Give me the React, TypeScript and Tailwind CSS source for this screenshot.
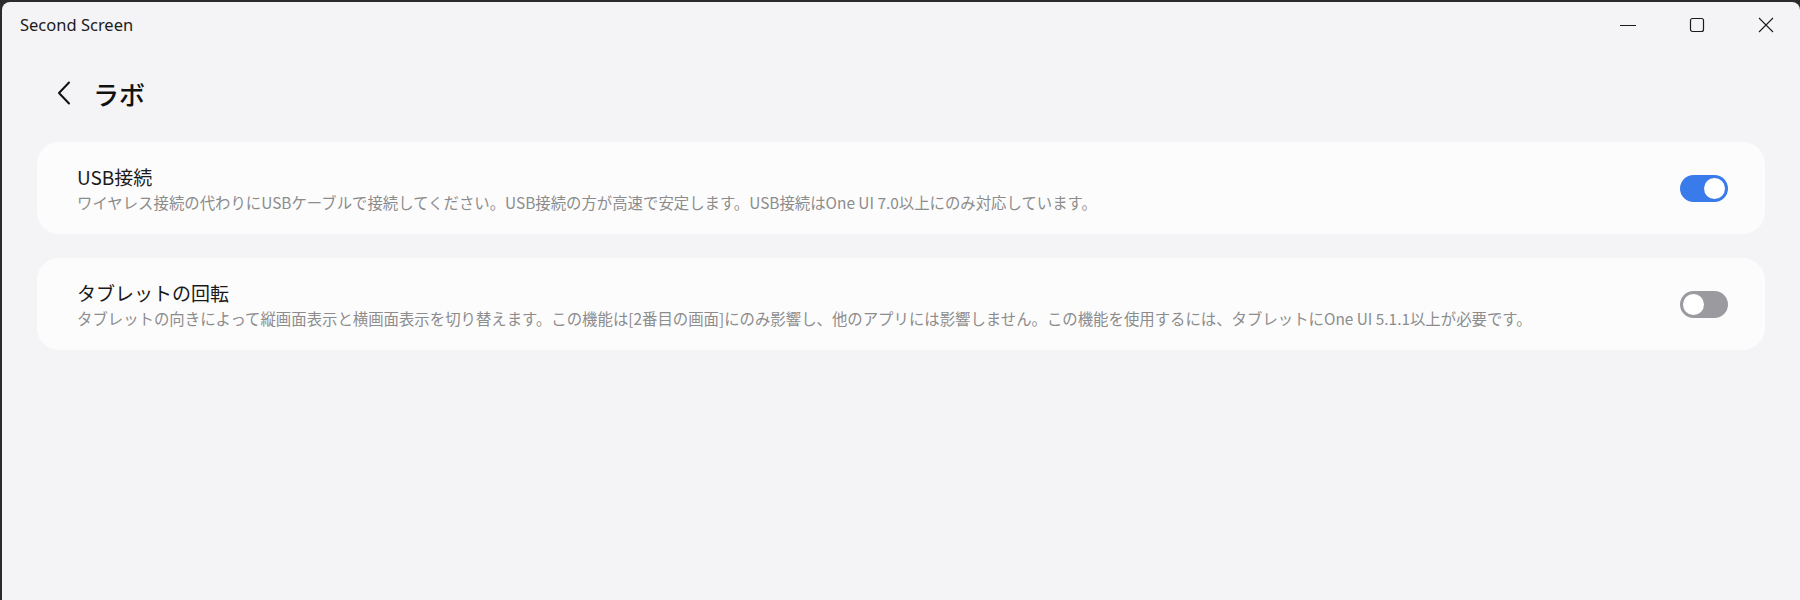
import React, { useState } from "react";

const jp = { fontFamily: '"Noto Sans CJK JP", sans-serif' };

type Setting = {
  id: string;
  title: string;
  description: string;
  enabled: boolean;
};

const initialSettings: Setting[] = [
  {
    id: "usb",
    title: "USB接続",
    description:
      "ワイヤレス接続の代わりにUSBケーブルで接続してください。USB接続の方が高速で安定します。USB接続はOne UI 7.0以上にのみ対応しています。",
    enabled: true,
  },
  {
    id: "rotate",
    title: "タブレットの回転",
    description:
      "タブレットの向きによって縦画面表示と横画面表示を切り替えます。この機能は[2番目の画面]にのみ影響し、他のアプリには影響しません。この機能を使用するには、タブレットにOne UI 5.1.1以上が必要です。",
    enabled: false,
  },
];

const Toggle: React.FC<{ on: boolean; onClick: () => void }> = ({ on, onClick }) => (
  <button
    onClick={onClick}
    className={
      on
        ? "w-[48px] h-[27px] rounded-full bg-[#3a7bec] flex items-center justify-end px-[3px]"
        : "w-[48px] h-[27px] rounded-full bg-[#9b9a9f] flex items-center justify-start px-[3px]"
    }
  >
    <span className="w-[21px] h-[21px] rounded-full bg-white block" />
  </button>
);

const App: React.FC = () => {
  const [settings, setSettings] = useState(initialSettings);

  const toggle = (id: string) =>
    setSettings((s) => s.map((x) => (x.id === id ? { ...x, enabled: !x.enabled } : x)));

  return (
    <div className="w-full h-[600px] bg-[#2b2b2b] pl-[2px] pt-[2px] overflow-hidden">
      <div className="h-full rounded-t-[8px] bg-[#f4f4f6] flex flex-col">
        {/* Title bar */}
        <div className="h-[46px] flex items-center justify-between pl-[18px]">
          <span className="text-[16.5px] text-[#1b1b1b]" style={{ fontFamily: '"Noto Sans", sans-serif' }}>
            Second Screen
          </span>
          <div className="flex h-full">
            <div className="w-[69px] h-full flex items-center justify-center">
              <svg width="16" height="16" viewBox="0 0 16 16">
                <path d="M0 8.5h16" stroke="#1b1b1b" strokeWidth="1" />
              </svg>
            </div>
            <div className="w-[69px] h-full flex items-center justify-center">
              <svg width="16" height="16" viewBox="0 0 16 16">
                <rect x="1.5" y="1.5" width="13" height="13" rx="2" fill="none" stroke="#1b1b1b" strokeWidth="1.2" />
              </svg>
            </div>
            <div className="w-[69px] h-full flex items-center justify-center">
              <svg width="16" height="16" viewBox="0 0 16 16">
                <path d="M1 1l14 14M15 1L1 15" stroke="#1b1b1b" strokeWidth="1.1" />
              </svg>
            </div>
          </div>
        </div>

        {/* Header */}
        <div className="flex items-center h-[56px] mt-[17px] pl-[53px] gap-[20px]">
          <svg width="18" height="24" viewBox="0 0 18 24">
            <path d="M14 1.5L4 12l10 10.5" fill="none" stroke="#111" strokeWidth="2" strokeLinecap="round" strokeLinejoin="round" />
          </svg>
          <h1 className="text-[26px] text-[#111] font-medium" style={jp}>
            ラボ
          </h1>
        </div>

        {/* Settings cards */}
        <div className="flex flex-col gap-[24px] mt-[21px] px-[35px]">
          {settings.map((s) => (
            <div
              key={s.id}
              className="h-[92px] rounded-[22px] bg-[#fcfcfd] flex items-center justify-between pl-[40px] pr-[37px]"
            >
              <div className="mt-[1px] flex flex-col" style={jp}>
                <span className="text-[19px] leading-[26px] text-[#1a1a1a]">{s.title}</span>
                <span className="text-[15.4px] leading-[24px] text-[#8c8c8c]">{s.description}</span>
              </div>
              <Toggle on={s.enabled} onClick={() => toggle(s.id)} />
            </div>
          ))}
        </div>
      </div>
    </div>
  );
};

export default App;
